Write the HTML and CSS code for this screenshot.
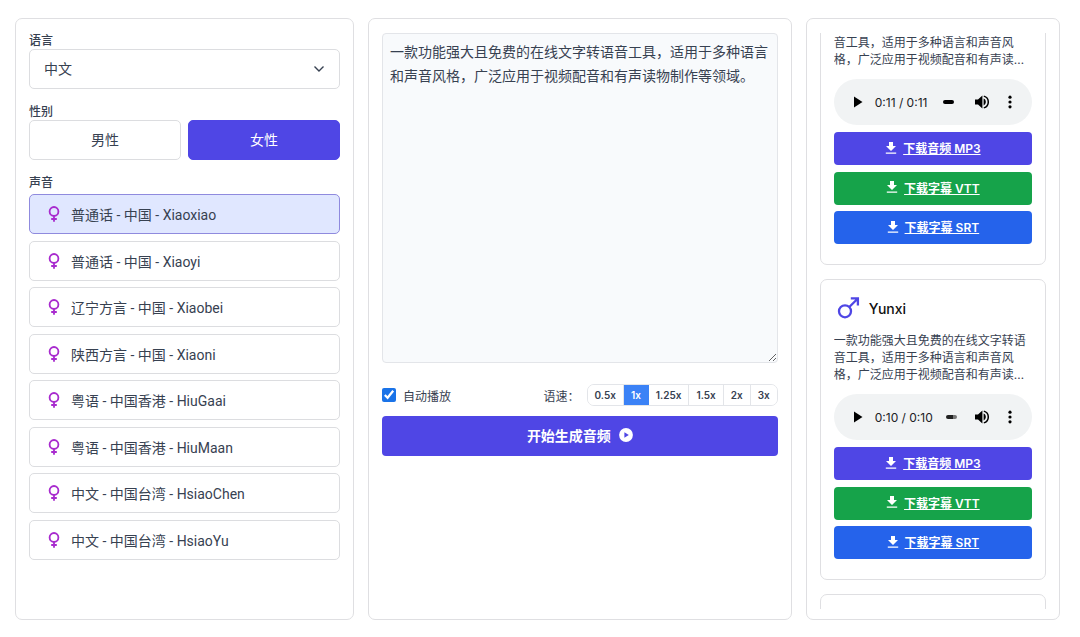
FILE: index.html
```html
<!DOCTYPE html>
<html lang="zh-CN">
<head>
<meta charset="utf-8">
<meta name="viewport" content="width=device-width, initial-scale=1">
<title>文字转语音</title>
<link rel="stylesheet" href="styles.css">
</head>
<body>
<svg class="sprite" aria-hidden="true">
  <symbol id="female" viewBox="0 0 14 16"><g fill="none" stroke="currentColor" stroke-width="1.8"><circle cx="7" cy="5.4" r="4.4"/><path d="M7 9.800v6M4.200 13h5.600"/></g></symbol>
  <symbol id="male" viewBox="0 0 24 24"><g fill="none" stroke="currentColor" stroke-width="2.3"><circle cx="8" cy="15.3" r="6"/><path d="M12.3 11 20.6 2.7M13.8 2.4h7.1v7.1"/></g></symbol>
  <symbol id="download" viewBox="0 0 12 14"><path fill="currentColor" d="M4 1h4v4h3L6 10 1 5h3zM.8 11.4h10.4v1.3H.8z"/></symbol>
  <symbol id="play" viewBox="0 0 24 24"><path fill="currentColor" d="M8 6.5v11l8.5-5.5z"/></symbol>
  <symbol id="volume" viewBox="0 0 24 24"><path fill="currentColor" d="M5 9.6v4.8h3l4.400 4.200V5.400L8 9.600z"/><path fill="currentColor" d="M13.600 8.600v6.800c1.400-.6 2.200-1.900 2.200-3.400s-.8-2.800-2.200-3.400z"/><path fill="none" stroke="currentColor" stroke-width="1.500" d="M13.800 6.100c2.600.7 4.500 3 4.500 5.900s-1.900 5.200-4.500 5.900"/></symbol>
  <symbol id="dots" viewBox="0 0 24 24"><g fill="currentColor"><circle cx="12" cy="7.200" r="1.600"/><circle cx="12" cy="12" r="1.600"/><circle cx="12" cy="16.800" r="1.600"/></g></symbol>
</svg>

<main class="layout">
  <section class="panel settings">
    <div class="field">
      <label class="caption" for="lang">语言</label>
      <div class="select">
        <select id="lang"><option>中文</option></select>
        <svg class="chevron" viewBox="0 0 12 8"><path d="M1.500 1.500 6 6l4.500-4.500" fill="none" stroke="currentColor" stroke-width="1.400"/></svg>
      </div>
    </div>
    <div class="field">
      <span class="caption">性别</span>
      <div class="genders">
        <button class="choice" type="button">男性</button>
        <button class="choice chosen" type="button">女性</button>
      </div>
    </div>
    <div class="field">
      <span class="caption">声音</span>
      <div class="voices">
        <button class="voice selected" type="button"><svg><use href="#female"/></svg>普通话 - 中国 - Xiaoxiao</button>
        <button class="voice" type="button"><svg><use href="#female"/></svg>普通话 - 中国 - Xiaoyi</button>
        <button class="voice" type="button"><svg><use href="#female"/></svg>辽宁方言 - 中国 - Xiaobei</button>
        <button class="voice" type="button"><svg><use href="#female"/></svg>陕西方言 - 中国 - Xiaoni</button>
        <button class="voice" type="button"><svg><use href="#female"/></svg>粤语 - 中国香港 - HiuGaai</button>
        <button class="voice" type="button"><svg><use href="#female"/></svg>粤语 - 中国香港 - HiuMaan</button>
        <button class="voice" type="button"><svg><use href="#female"/></svg>中文 - 中国台湾 - HsiaoChen</button>
        <button class="voice" type="button"><svg><use href="#female"/></svg>中文 - 中国台湾 - HsiaoYu</button>
      </div>
    </div>
  </section>

  <section class="panel editor">
    <textarea class="source" aria-label="文本">一款功能强大且免费的在线文字转语音工具，适用于多种语言和声音风格，广泛应用于视频配音和有声读物制作等领域。</textarea>
    <div class="options">
      <label class="autoplay"><input type="checkbox" checked>自动播放</label>
      <div class="speed">
        <span>语速：</span>
        <div class="segments">
          <button type="button">0.5x</button>
          <button class="active" type="button">1x</button>
          <button type="button">1.25x</button>
          <button type="button">1.5x</button>
          <button type="button">2x</button>
          <button type="button">3x</button>
        </div>
      </div>
    </div>
    <button class="generate" type="button">开始生成音频<svg viewBox="0 0 14 14"><circle cx="7" cy="7" r="6.900" fill="#fff"/><path d="M5.400 4.200v5.600L9.800 7z" fill="#4f46e5"/></svg></button>
  </section>

  <section class="panel results">
    <div class="history" id="history">
      <article class="card">
        <header class="speaker"><svg><use href="#male"/></svg><h2>Yunxi</h2></header>
        <p class="excerpt">一款功能强大且免费的在线文字转语音工具，适用于多种语言和声音风格，广泛应用于视频配音和有声读物制作等领域。</p>
        <div class="player">
          <button type="button" aria-label="播放"><svg><use href="#play"/></svg></button>
          <span class="time">0:11 / 0:11</span>
          <input class="seek" type="range" aria-label="进度">
          <button type="button" aria-label="音量"><svg><use href="#volume"/></svg></button>
          <button type="button" aria-label="更多"><svg><use href="#dots"/></svg></button>
        </div>
        <div class="downloads">
          <a class="download mp3" href="#"><svg><use href="#download"/></svg><span>下载音频 MP3</span></a>
          <a class="download vtt" href="#"><svg><use href="#download"/></svg><span>下载字幕 VTT</span></a>
          <a class="download srt" href="#"><svg><use href="#download"/></svg><span>下载字幕 SRT</span></a>
        </div>
      </article>
      <article class="card">
        <header class="speaker"><svg><use href="#male"/></svg><h2>Yunxi</h2></header>
        <p class="excerpt">一款功能强大且免费的在线文字转语音工具，适用于多种语言和声音风格，广泛应用于视频配音和有声读物制作等领域。</p>
        <div class="player">
          <button type="button" aria-label="播放"><svg><use href="#play"/></svg></button>
          <span class="time">0:10 / 0:10</span>
          <input class="seek partial" type="range" aria-label="进度">
          <button type="button" aria-label="音量"><svg><use href="#volume"/></svg></button>
          <button type="button" aria-label="更多"><svg><use href="#dots"/></svg></button>
        </div>
        <div class="downloads">
          <a class="download mp3" href="#"><svg><use href="#download"/></svg><span>下载音频 MP3</span></a>
          <a class="download vtt" href="#"><svg><use href="#download"/></svg><span>下载字幕 VTT</span></a>
          <a class="download srt" href="#"><svg><use href="#download"/></svg><span>下载字幕 SRT</span></a>
        </div>
      </article>
      <article class="card pending"></article>
    </div>
  </section>
</main>
<script src="app.js"></script>
</body>
</html>
```
FILE: styles.css
```css
* { box-sizing: border-box; }

body {
  margin: 0;
  background: #fff;
  color: #374151;
  font-family: Inter, "Noto Sans CJK SC", sans-serif;
  font-size: 14px;
}

button, select, textarea { font: inherit; color: inherit; }
button { margin: 0; padding: 0; cursor: pointer; }

.sprite { display: none; }

.layout {
  display: grid;
  grid-template-columns: 4fr 5fr 3fr;
  grid-template-rows: minmax(0, 1fr);
  gap: 14px;
  height: 100vh;
  padding: 18px 20px 17px 15px;
}

.panel {
  display: flex;
  flex-direction: column;
  min-width: 0;
  padding: 14px 13px 10px;
  border: 1px solid #dfdfe2;
  border-radius: 7px;
}

/* Settings */
.settings { gap: 15px; }
.field { display: flex; flex-direction: column; }
.caption { font-size: 12px; line-height: 16px; font-weight: 500; }

.select { position: relative; }
.select select {
  width: 100%;
  height: 40px;
  padding: 0 14px 2px;
  border: 1px solid #dcdde0;
  border-radius: 5px;
  background: #fff;
  appearance: none;
}
.chevron {
  position: absolute;
  top: 16px;
  right: 15px;
  width: 12px;
  height: 8px;
  pointer-events: none;
}

.genders { display: grid; grid-template-columns: 1fr 1fr; gap: 7px; }
.choice {
  height: 40px;
  padding-bottom: 2px;
  border: 1px solid #dcdde0;
  border-radius: 5px;
  background: #fff;
}
.choice.chosen { border-color: #4f46e5; background: #4f46e5; color: #fff; }

.voices {
  display: flex;
  flex-direction: column;
  justify-content: space-between;
  height: 366px;
  margin-top: 3px;
}
.voice {
  display: flex;
  align-items: center;
  gap: 10px;
  height: 40px;
  padding: 0 17px;
  border: 1px solid #dcdde0;
  border-radius: 5px;
  background: #fff;
  font-family: Roboto, "Noto Sans CJK SC", sans-serif;
  white-space: pre;
}
.voice svg { width: 14px; height: 16px; color: #a82bce; }
.voice.selected { border-color: #8f8ade; background: #e0e7ff; }

/* Editor */
.source {
  display: block;
  width: 100%;
  height: 330px;
  padding: 6px 7px;
  border: 1px solid #e3e5e9;
  border-radius: 4px;
  background: #f8fafc;
  line-height: 24px;
  resize: vertical;
}
.options {
  display: flex;
  align-items: center;
  justify-content: space-between;
  margin: 21px 0 10px;
  font-size: 12px;
}
.autoplay { display: flex; align-items: center; gap: 7px; }
.autoplay input { width: 14px; height: 14px; margin: 0; accent-color: #1a73e8; }
.speed { display: flex; align-items: center; gap: 7px; }
.segments {
  display: flex;
  height: 22px;
  border: 1px solid #e3e5e9;
  border-radius: 7px;
  overflow: hidden;
}
.segments button {
  padding: 0 7px;
  border: 0;
  border-right: 1px solid #e3e5e9;
  background: #fff;
  font-size: 10px;
  font-weight: 600;
}
.segments button:last-child { border-right: 0; }
.segments .active { border-color: #3b82f6; background: #3b82f6; color: #fff; }

.generate {
  display: flex;
  align-items: center;
  justify-content: center;
  gap: 8px;
  height: 40px;
  padding-bottom: 2px;
  border: 0;
  border-radius: 4px;
  background: #4f46e5;
  color: #fff;
  font-weight: 600;
}
.generate svg { width: 14px; height: 14px; }

/* Results */
.history {
  display: flex;
  flex: 1;
  flex-direction: column;
  gap: 14px;
  min-height: 0;
  overflow-y: auto;
  scrollbar-width: none;
}
.card {
  flex: none;
  padding: 14px 13px 20px;
  border: 1px solid #dfdfe2;
  border-radius: 7px;
}
.card.pending { min-height: 301px; }

.speaker { display: flex; align-items: center; gap: 8px; height: 28px; }
.speaker svg { width: 24px; height: 24px; margin-left: 3px; color: #4f46e5; }
.speaker h2 { margin: 0; color: #111; font-size: 14px; font-weight: 500; }

.excerpt {
  display: -webkit-box;
  margin: 10px 0 11px;
  overflow: hidden;
  font-size: 12px;
  line-height: 17px;
  -webkit-box-orient: vertical;
  -webkit-line-clamp: 3;
}

.player {
  display: flex;
  align-items: center;
  height: 46px;
  padding: 0 10px 0 12px;
  border-radius: 23px;
  background: #f1f3f4;
  color: #000;
}
.player button {
  display: flex;
  width: 24px;
  height: 24px;
  border: 0;
  background: none;
}
.player button + button { margin-left: 4px; }
.player svg { width: 24px; height: 24px; }
.time { margin-left: 5px; color: #202124; font-size: 12px; white-space: nowrap; }
.seek {
  width: 11px;
  height: 4px;
  margin: 0 auto;
  border-radius: 2px;
  background: #000;
  appearance: none;
}
.seek::-webkit-slider-thumb { width: 0; height: 0; appearance: none; }
.seek.partial { background: linear-gradient(90deg, #222 60%, #777 60%); }

.downloads {
  display: flex;
  flex-direction: column;
  justify-content: space-between;
  height: 112px;
  margin-top: 7px;
}
.download {
  display: flex;
  align-items: center;
  justify-content: center;
  gap: 6px;
  height: 33px;
  padding-bottom: 2px;
  border-radius: 4px;
  color: #fff;
  font-size: 12px;
  font-weight: 600;
  text-decoration: none;
}
.download span { text-decoration: underline; }
.download svg { width: 12px; height: 14px; }
.mp3 { background: #4f46e5; }
.vtt { background: #16a34a; }
.srt { background: #2563eb; }
```
FILE: app.js
```js
document.getElementById("history").scrollTop = 69;
```
